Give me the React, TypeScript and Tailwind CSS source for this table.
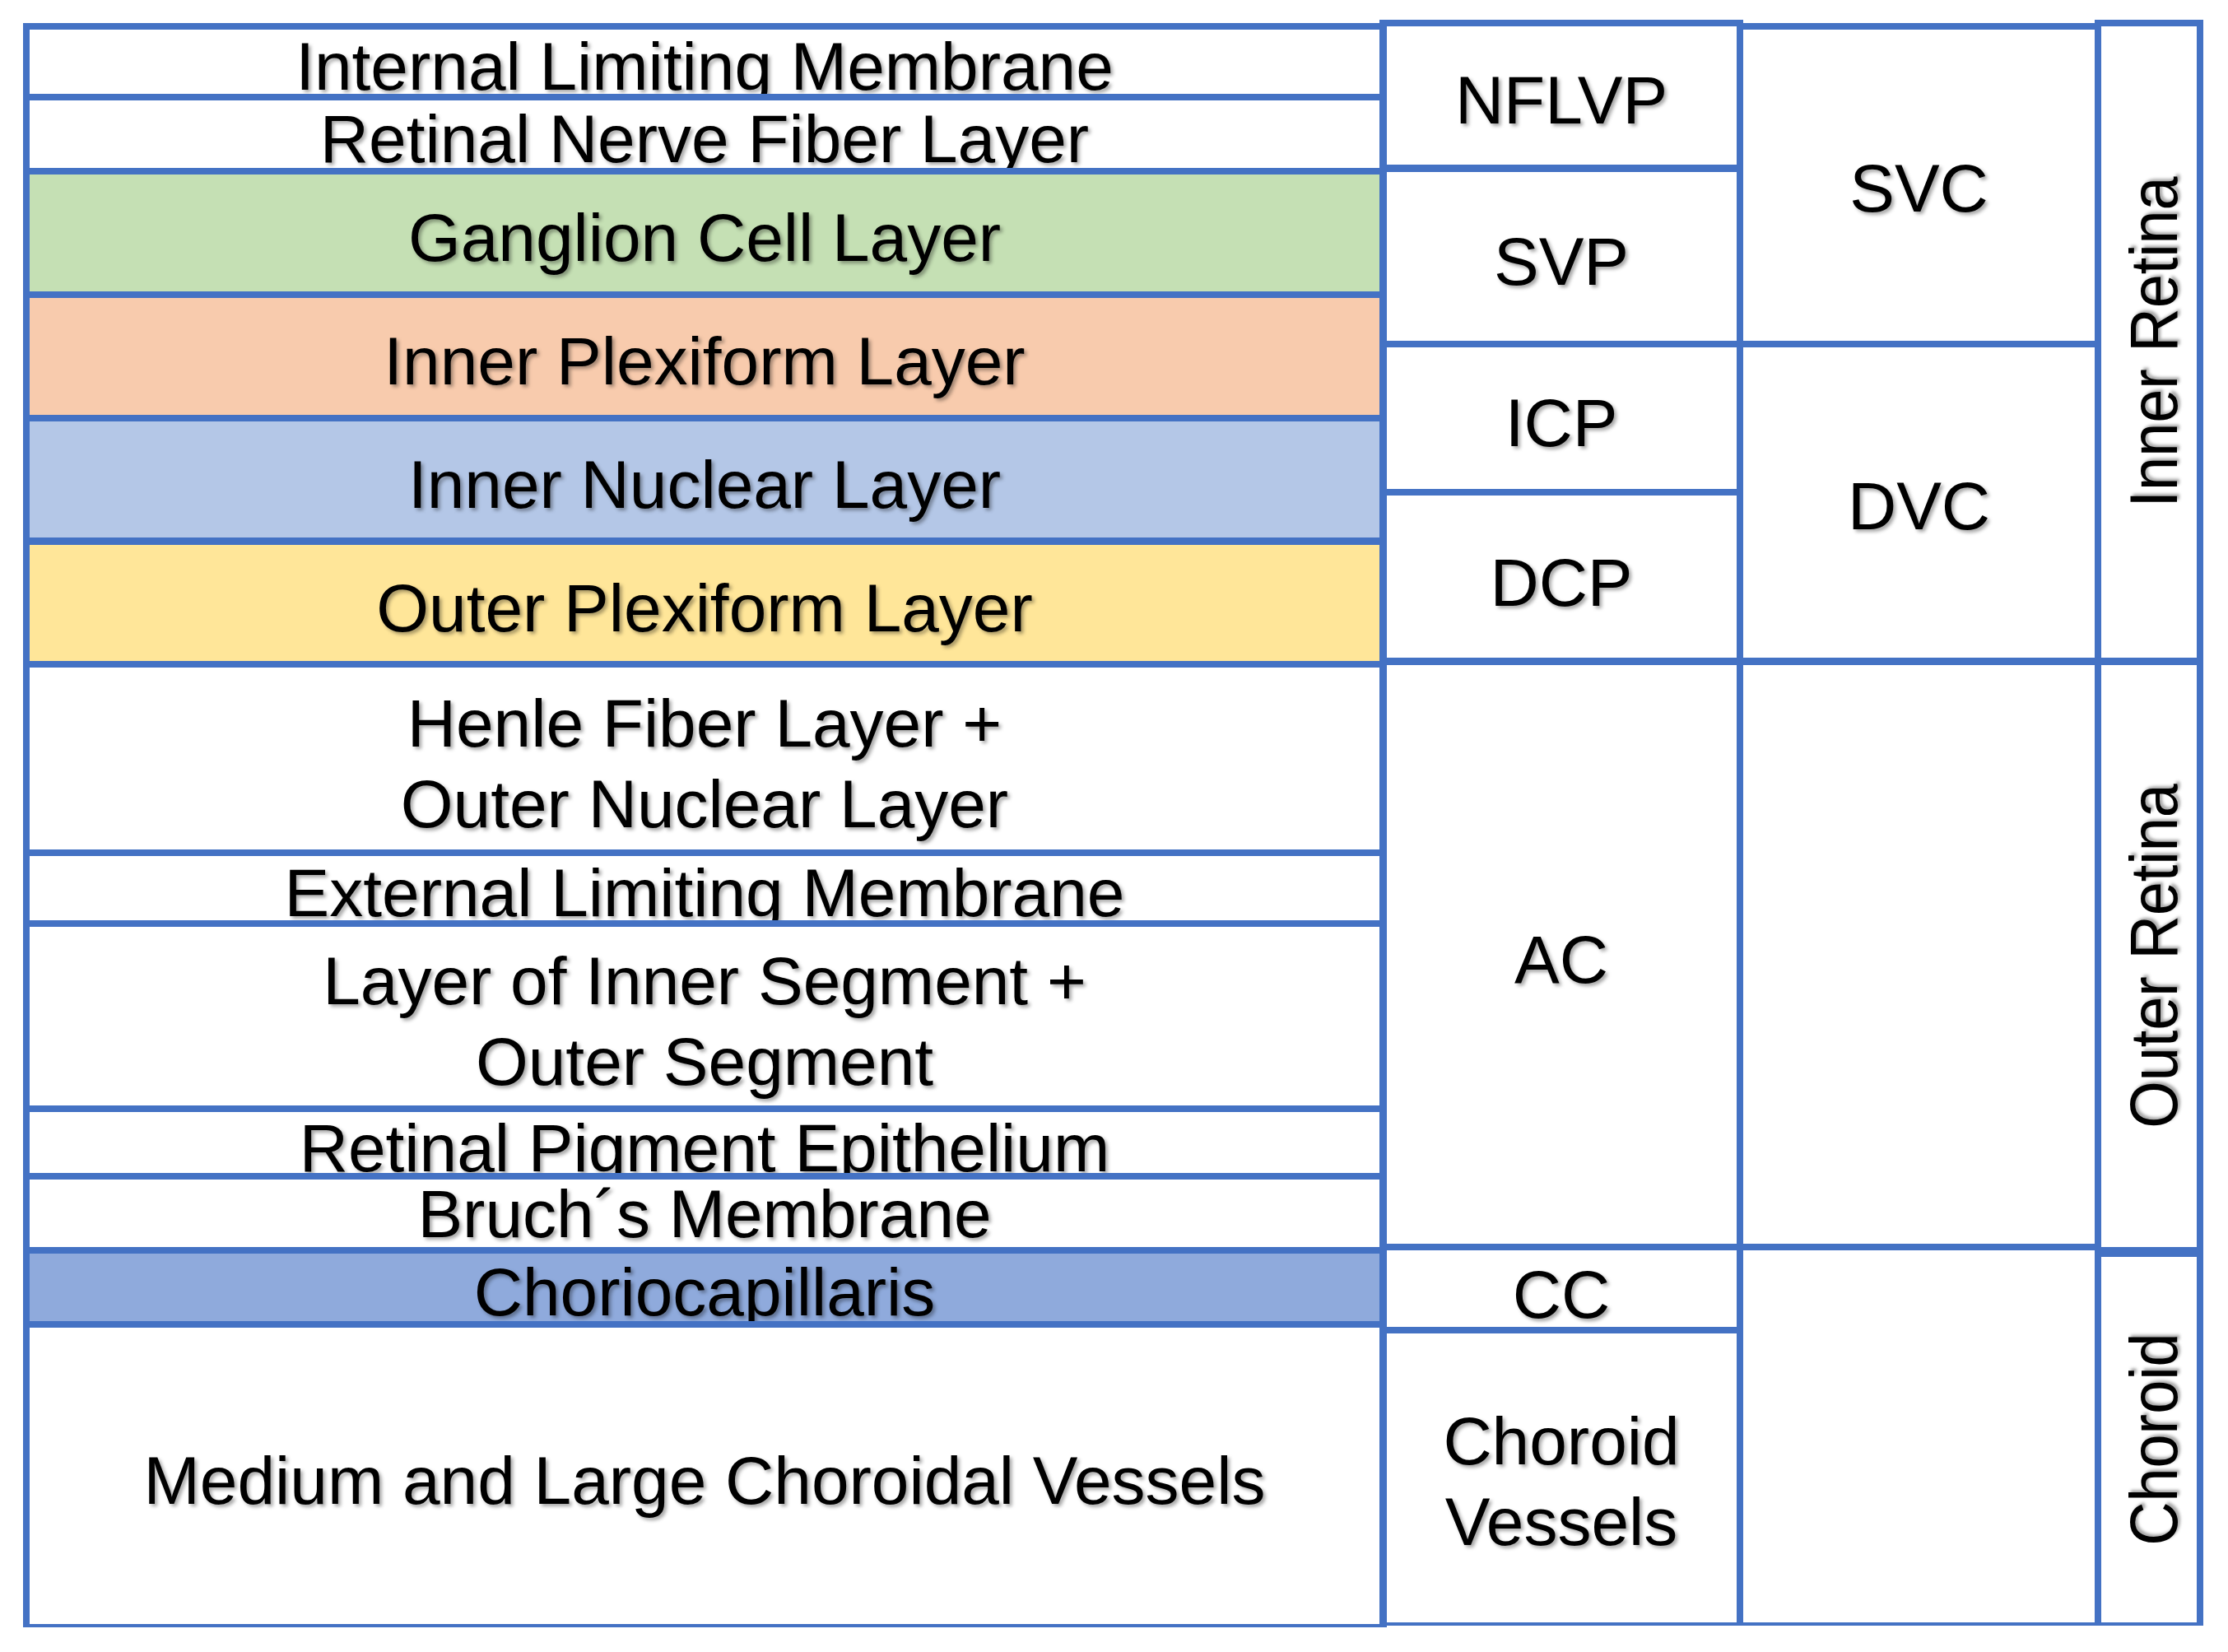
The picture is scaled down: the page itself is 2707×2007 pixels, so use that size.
import React from 'react';

type Cell = { label?: React.ReactNode; cls: string };

const base =
  'flex items-center justify-center overflow-hidden border-[#4472C4] text-center whitespace-nowrap';

const layers: Cell[] = [
  { label: 'Internal Limiting Membrane', cls: 'h-[78px] pt-[12px]' },
  { label: 'Retinal Nerve Fiber Layer', cls: 'h-[90px] pt-[12px] border-t-8' },
  { label: 'Ganglion Cell Layer', cls: 'h-[150px] pt-[12px] border-t-8 bg-[#C5E0B4]' },
  { label: 'Inner Plexiform Layer', cls: 'h-[150px] pt-[12px] border-t-8 bg-[#F8CBAD]' },
  { label: 'Inner Nuclear Layer', cls: 'h-[149px] pt-[12px] border-t-8 bg-[#B4C7E7]' },
  { label: 'Outer Plexiform Layer', cls: 'h-[150px] pt-[12px] border-t-[9px] bg-[#FFE699]' },
  {
    label: (
      <>
        Henle Fiber Layer +<br />
        Outer Nuclear Layer
      </>
    ),
    cls: 'h-[229px] pt-[12px] border-t-8',
  },
  { label: 'External Limiting Membrane', cls: 'h-[86px] pt-[12px] border-t-8' },
  {
    label: (
      <>
        Layer of Inner Segment +<br />
        Outer Segment
      </>
    ),
    cls: 'h-[225px] pt-[12px] border-t-8',
  },
  { label: 'Retinal Pigment Epithelium', cls: 'h-[82px] pt-[14px] border-t-8' },
  { label: 'Bruch´s Membrane', cls: 'h-[90px] pt-[2px] border-t-8' },
  { label: 'Choriocapillaris', cls: 'h-[90px] pt-[12px] border-t-8 bg-[#8FAADC]' },
  { label: 'Medium and Large Choroidal Vessels', cls: 'h-[368px] pt-[12px] border-t-8' },
];

const plexuses: Cell[] = [
  { label: 'NFLVP', cls: 'h-[168px] pt-[12px]' },
  { label: 'SVP', cls: 'h-[214px] pt-[12px] border-t-[9px]' },
  { label: 'ICP', cls: 'h-[180px] pt-[12px] border-t-8' },
  { label: 'DCP', cls: 'h-[205px] pt-[14px] border-t-8' },
  { label: 'AC', cls: 'h-[712px] pt-[12px] border-t-[9px]' },
  { label: 'CC', cls: 'h-[101px] pt-[14px] border-t-8' },
  {
    label: (
      <>
        Choroid
        <br />
        Vessels
      </>
    ),
    cls: 'h-[359px] pt-[8px] border-t-8',
  },
];

const complexes: Cell[] = [
  { label: 'SVC', cls: 'h-[378px] pt-[8px]' },
  { label: 'DVC', cls: 'h-[385px] pt-[8px] border-t-8' },
  { cls: 'h-[712px] border-t-[9px]' },
  { cls: 'h-[460px] border-t-8' },
];

const regions: Cell[] = [
  { label: 'Inner Retina', cls: 'h-[767px]' },
  { label: 'Outer Retina', cls: 'h-[716px] border-t-[9px]' },
  { label: 'Choroid', cls: 'h-[456px] border-t-[12px]' },
];

function Label({ children }: { children?: React.ReactNode }) {
  if (!children) return null;
  return (
    <span className="text-[82px] leading-[98px] text-black [text-shadow:3px_3px_4px_rgba(0,0,0,0.35)]">
      {children}
    </span>
  );
}

function Column({ cells, className }: { cells: Cell[]; className: string }) {
  return (
    <div className={`flex flex-col border-[#4472C4] ${className}`}>
      {cells.map((c, i) => (
        <div key={i} className={`${base} ${c.cls}`}>
          <Label>{c.label}</Label>
        </div>
      ))}
    </div>
  );
}

export default function App() {
  return (
    <div className="min-h-screen bg-white pl-[28px] flex items-start font-['Liberation_Sans',Arial,sans-serif]">
      <Column
        cells={layers}
        className="mt-[28px] w-[1657px] border-t-8 border-l-8 border-r-[9px] border-b-4"
      />
      <Column
        cells={plexuses}
        className="-ml-[9px] mt-[24px] w-[442px] border-t-8 border-l-8 border-r-8 border-b-4"
      />
      <Column
        cells={complexes}
        className="-ml-[8px] mt-[28px] w-[443px] border-t-8 border-l-8 border-r-8 border-b-4"
      />
      <div className="-ml-[8px] mt-[24px] w-[132px] flex flex-col border-[#4472C4] border-t-8 border-l-8 border-r-8 border-b-4">
        {regions.map((c, i) => (
          <div key={i} className={`flex items-center justify-center overflow-hidden border-[#4472C4] pl-[11px] ${c.cls}`}>
            <span className="[writing-mode:vertical-rl] rotate-180 scale-y-90 whitespace-nowrap text-[82px] leading-[98px] text-black [text-shadow:3px_3px_4px_rgba(0,0,0,0.35)]">
              {c.label}
            </span>
          </div>
        ))}
      </div>
    </div>
  );
}
